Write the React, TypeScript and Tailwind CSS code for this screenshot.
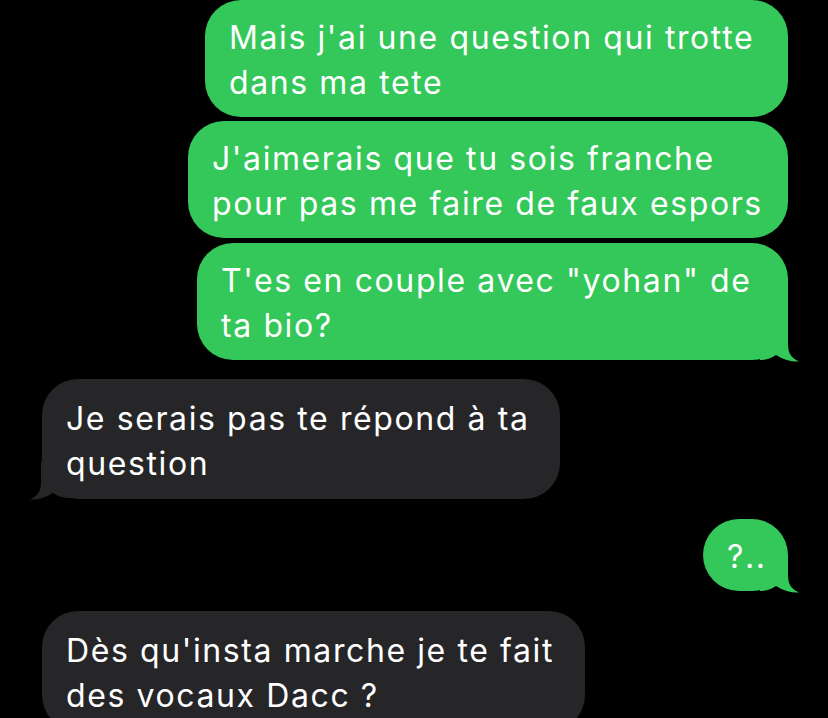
import React from 'react';

type Msg = { from: 'me' | 'them'; lines: string[]; width: string; tail?: boolean; gap: string };

const messages: Msg[] = [
    { from: 'me', lines: ["Mais j'ai une question qui trotte", 'dans ma tete'], width: 'w-[583px]', gap: 'mt-0' },
    { from: 'me', lines: ["J'aimerais que tu sois franche", 'pour pas me faire de faux espors'], width: 'w-[600px]', gap: 'mt-[4px]' },
    { from: 'me', lines: ['T\'es en couple avec "yohan" de', 'ta bio?'], width: 'w-[591px]', tail: true, gap: 'mt-[5px]' },
    { from: 'them', lines: ['Je serais pas te répond à ta', 'question'], width: 'w-[518px]', tail: true, gap: 'mt-[19px]' },
    { from: 'me', lines: ['?..'], width: 'w-[85px]', tail: true, gap: 'mt-[20px]' },
    { from: 'them', lines: ["Dès qu'insta marche je te fait", 'des vocaux Dacc ?'], width: 'w-[543px]', gap: 'mt-[20px]' },
];

function Tail({ side, color }: { side: 'left' | 'right'; color: string }) {
    if (side === 'right') {
        return (
            <svg className="absolute bottom-[-2px] right-[-12px] w-[40px] h-[38px]" viewBox="0 0 40 38">
                <path d="M0 0 L28 0 L28 20 C28 29 31 34 39 37.5 C32 38 24 36 16 31 C11 34.5 6 36 0 36 Z" fill={color} />
            </svg>
        );
    }
    return (
        <svg className="absolute bottom-[-1px] left-[-13px] w-[40px] h-[38px]" viewBox="0 0 40 38">
            <path d="M40 0 L12 0 L12 20 C12 29 9 34 1 37.5 C8 38 16 36 24 31 C29 34.5 34 36 40 36 Z" fill={color} />
        </svg>
    );
}

export default function App() {
    return (
        <div className="w-[828px] h-[718px] bg-black overflow-hidden flex flex-col pr-[40px] pl-[42px]" style={{ fontFamily: 'Inter, "Noto Sans", sans-serif' }}>
            {messages.map((m, i) => {
                const mine = m.from === 'me';
                const color = mine ? '#34c759' : '#262628';
                return (
                    <div key={i} className={`flex ${mine ? 'justify-end' : 'justify-start'} ${m.gap}`}>
                        <div className={`relative ${m.width} rounded-[36px] pl-[24px] text-white text-[32px] leading-[45px] tracking-[1.6px] whitespace-nowrap ${mine ? 'bg-[#34c759] pt-[15px] pb-[12px]' : 'bg-[#262628] pt-[17px] pb-[13px]'}`}>
                            {m.tail && <Tail side={mine ? 'right' : 'left'} color={color} />}
                            <div className="relative">
                                {m.lines.map((l, j) => (
                                    <div key={j}>{l}</div>
                                ))}
                            </div>
                        </div>
                    </div>
                );
            })}
        </div>
    );
}
